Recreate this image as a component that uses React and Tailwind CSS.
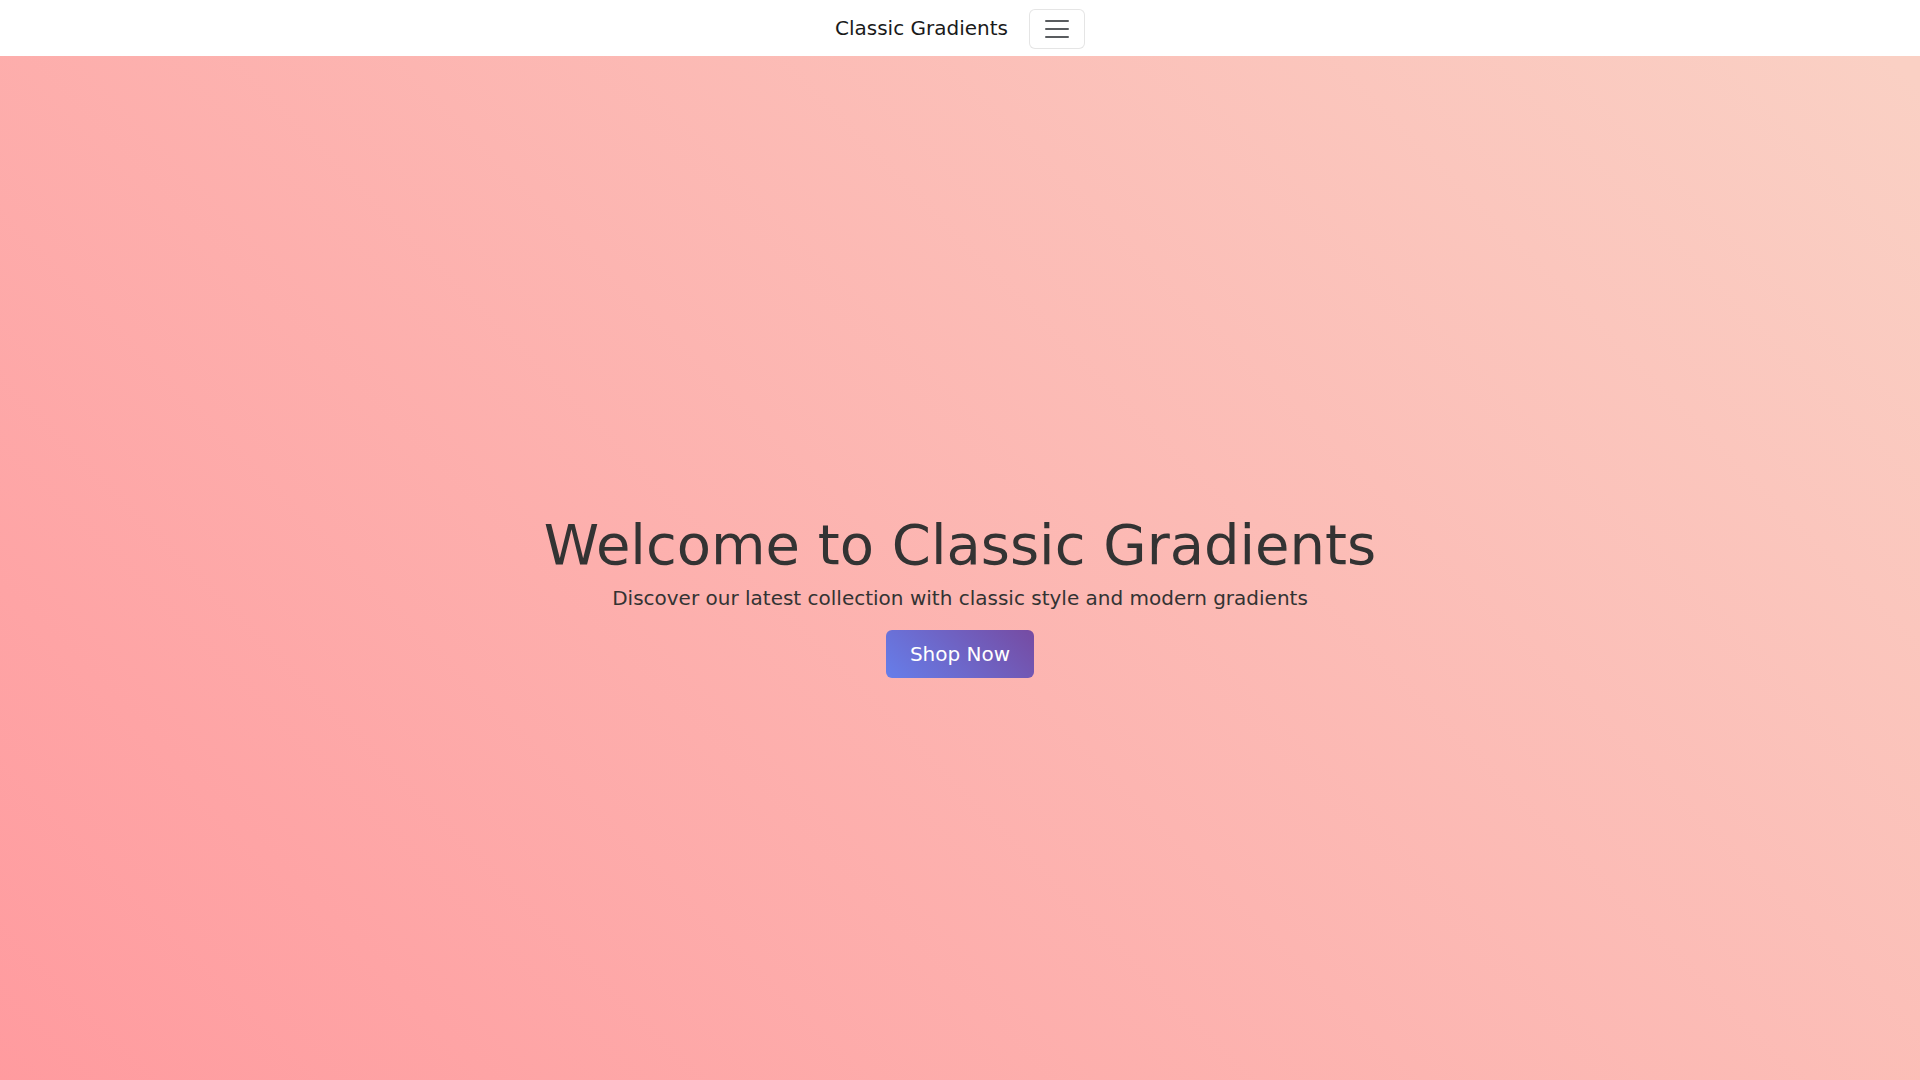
export default function App() {
  return (
    <div className="font-['DejaVu_Sans',sans-serif]">
      <nav className="h-[56px] bg-white flex items-center justify-center">
        <span className="text-[20px] leading-[30px] text-[#1a1a1a] mr-[21px]">Classic Gradients</span>
        <button className="w-[56px] h-[40px] mt-[2px] border border-[rgba(0,0,0,0.1)] rounded-[6px] flex items-center justify-center bg-white">
          <svg width="30" height="30" viewBox="0 0 30 30">
            <path d="M4 7h22M4 15h22M4 23h22" stroke="rgba(33,37,41,0.75)" strokeWidth="2" strokeLinecap="round" />
          </svg>
        </button>
      </nav>
      <section className="h-[1080px] flex items-center justify-center text-center bg-[linear-gradient(45deg,#ff9a9e_0%,#fad0c4_99%,#fad0c4_100%)]">
        <div className="flex flex-col items-center mb-[3px]">
          <h1 className="text-[56px] leading-[1.2] font-normal text-[#333] mb-[5px]">Welcome to Classic Gradients</h1>
          <p className="text-[20px] leading-[30px] text-[#333] mb-[17px]">Discover our latest collection with classic style and modern gradients</p>
          <button className="h-[48px] px-6 text-[20px] leading-[30px] text-white rounded-[6px] bg-[linear-gradient(45deg,#667eea,#764ba2)]">Shop Now</button>
        </div>
      </section>
    </div>
  );
}
